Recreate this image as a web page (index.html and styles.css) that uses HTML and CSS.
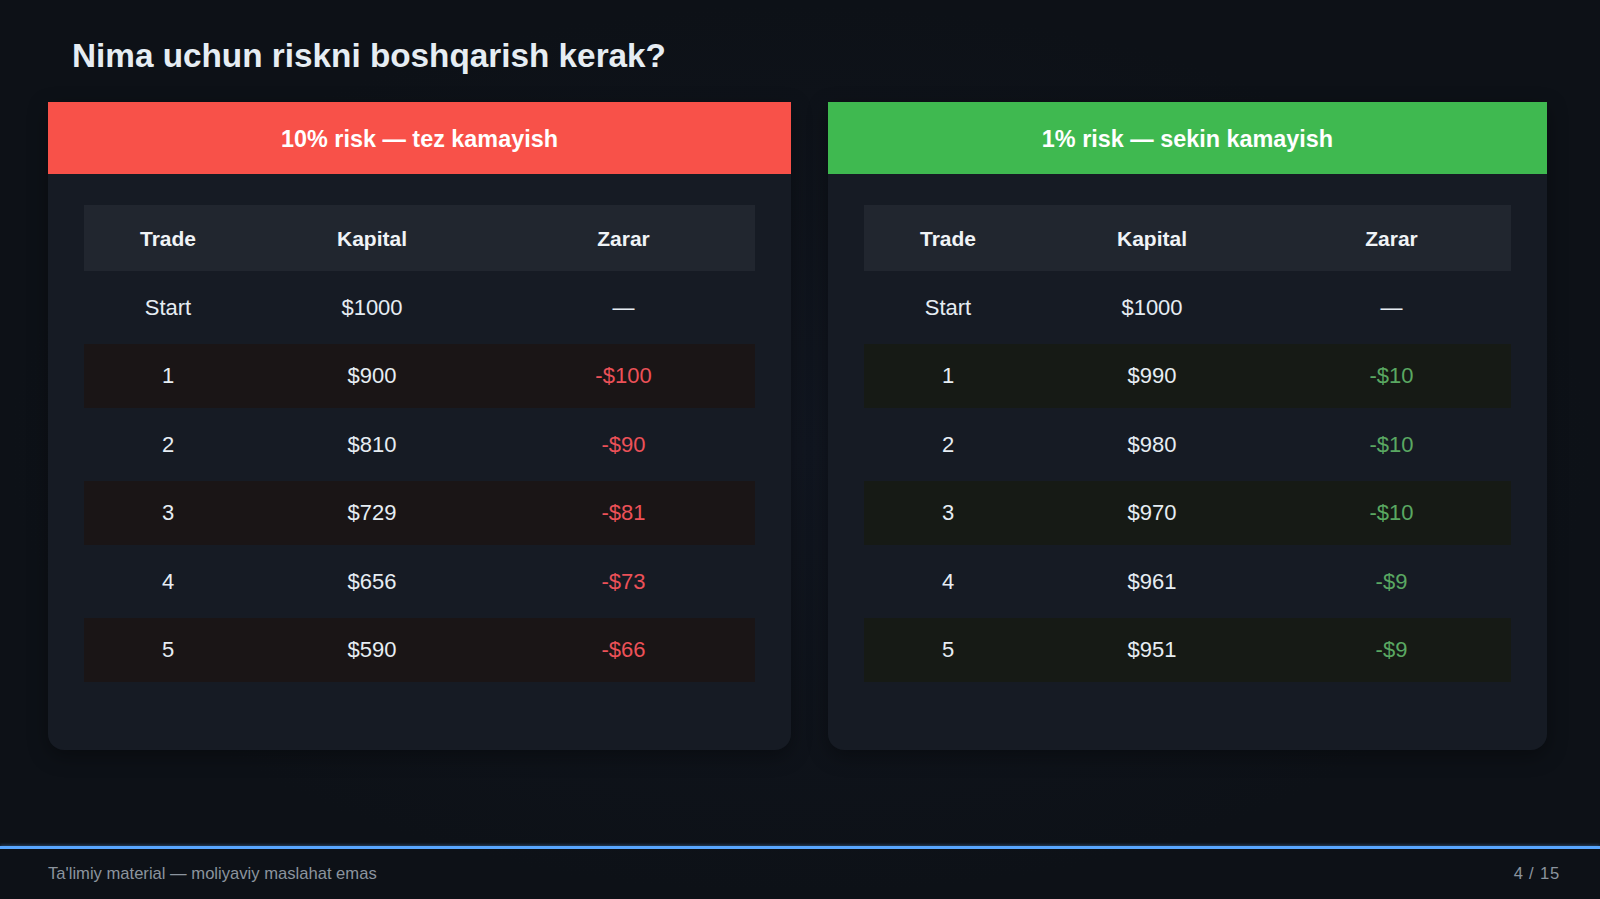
FILE: index.html
```html
<!DOCTYPE html>
<html lang="uz">
<head>
<meta charset="utf-8">
<title>Nima uchun riskni boshqarish kerak?</title>
<link rel="stylesheet" href="styles.css">
</head>
<body>
<div class="slide">
  <h1 class="title">Nima uchun riskni boshqarish kerak?</h1>
  <div class="panels">
    <section class="panel panel-red">
      <div class="panel-head">10% risk — tez kamayish</div>
      <div class="table">
        <div class="row head"><span>Trade</span><span>Kapital</span><span>Zarar</span></div>
        <div class="row"><span>Start</span><span>$1000</span><span>—</span></div>
        <div class="row tint"><span>1</span><span>$900</span><span class="loss">-$100</span></div>
        <div class="row"><span>2</span><span>$810</span><span class="loss">-$90</span></div>
        <div class="row tint"><span>3</span><span>$729</span><span class="loss">-$81</span></div>
        <div class="row"><span>4</span><span>$656</span><span class="loss">-$73</span></div>
        <div class="row tint"><span>5</span><span>$590</span><span class="loss">-$66</span></div>
      </div>
    </section>
    <section class="panel panel-green">
      <div class="panel-head">1% risk — sekin kamayish</div>
      <div class="table">
        <div class="row head"><span>Trade</span><span>Kapital</span><span>Zarar</span></div>
        <div class="row"><span>Start</span><span>$1000</span><span>—</span></div>
        <div class="row tint"><span>1</span><span>$990</span><span class="loss">-$10</span></div>
        <div class="row"><span>2</span><span>$980</span><span class="loss">-$10</span></div>
        <div class="row tint"><span>3</span><span>$970</span><span class="loss">-$10</span></div>
        <div class="row"><span>4</span><span>$961</span><span class="loss">-$9</span></div>
        <div class="row tint"><span>5</span><span>$951</span><span class="loss">-$9</span></div>
      </div>
    </section>
  </div>
  <footer class="footer">
    <span class="note">Ta'limiy material — moliyaviy maslahat emas</span>
    <span class="page">4 / 15</span>
  </footer>
</div>
</body>
</html>
```

FILE: styles.css
```css
* { box-sizing: border-box; }

html, body {
  margin: 0;
  padding: 0;
}

body {
  width: 1600px;
  height: 899px;
  overflow: hidden;
  background: #0d1117;
  font-family: "Liberation Sans", Arial, sans-serif;
  color: #e6edf3;
}

.slide {
  height: 899px;
  display: flex;
  flex-direction: column;
  background: radial-gradient(ellipse at 50% 50%, #111620 0%, #0d1117 70%);
}

.title {
  margin: 36px 0 0 72px;
  font-size: 33.3px;
  line-height: 40px;
  font-weight: bold;
  color: #e6edf3;
}

.panels {
  display: grid;
  grid-template-columns: 743fr 719fr;
  column-gap: 37px;
  margin: 26px 53px 0 48px;
  height: 648px;
}

.panel {
  background: #161b24;
  border-radius: 0 0 16px 16px;
  box-shadow: 0 6px 20px rgba(0, 0, 0, 0.35);
  padding: 0 36px;
}

.panel-head {
  height: 72px;
  margin: 0 -36px 31px;
  display: flex;
  align-items: center;
  justify-content: center;
  font-size: 23.4px;
  font-weight: bold;
  color: #ffffff;
  padding-top: 2px;
}

.panel-red .panel-head { background: #f85149; }
.panel-green .panel-head { background: #3fb950; }

.table {
  display: flex;
  flex-direction: column;
  row-gap: 4.5px;
}

.row {
  display: grid;
  grid-template-columns: 168px 240px 1fr;
  height: 64px;
  align-items: center;
  text-align: center;
  font-size: 22px;
  color: #e6edf3;
}

.row.head {
  height: 66px;
  background: #21262f;
  font-size: 21px;
  font-weight: bold;
  color: #f0f3f6;
  padding-top: 2px;
}

.panel-red .row.tint { background: #1a1516; }
.panel-green .row.tint { background: #161a15; }

.panel-red .loss { color: #ec5158; }
.panel-green .loss { color: #5aa862; }

.footer {
  margin-top: auto;
  height: 53px;
  border-top: 3px solid #58a6ff;
  box-shadow: 0 -1px 3px rgba(88, 166, 255, 0.35);
  display: flex;
  align-items: center;
  justify-content: space-between;
  padding: 0 41px 1px 48px;
  font-size: 16.6px;
  color: #8b949e;
}

.page {
  letter-spacing: 0.8px;
  margin-right: -1px;
}
```
